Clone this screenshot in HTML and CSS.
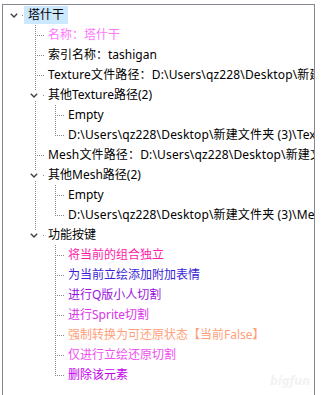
FILE: index.html
```html
<!DOCTYPE html>
<html lang="zh-CN">
<head>
    <meta charset="UTF-8">
    <meta name="viewport" content="width=device-width, initial-scale=1.0">
    <title>塔什干</title>
    <link rel="stylesheet" href="styles.css">
</head>
<body>
    <div class="tree">
        <div class="row">
            <span class="g expander"><svg width="8" height="5" viewBox="0 0 8 5"><path d="M0.8 0.8 L4 4 L7.2 0.8" fill="none" stroke="#404040" stroke-width="1.4"/></svg></span>
            <span class="label selected">塔什干</span>
        </div>
        <div class="row">
            <span class="g"></span><span class="g tee"></span>
            <span class="label violet">名称：塔什干</span>
        </div>
        <div class="row">
            <span class="g"></span><span class="g tee"></span>
            <span class="label">索引名称：tashigan</span>
        </div>
        <div class="row">
            <span class="g"></span><span class="g tee"></span>
            <span class="label path">Texture文件路径：D:\Users\qz228\Desktop\新建文件夹 (3)\Texture\tashigan.png</span>
        </div>
        <div class="row">
            <span class="g"></span>
            <span class="g line expander"><svg width="8" height="5" viewBox="0 0 8 5"><path d="M0.8 0.8 L4 4 L7.2 0.8" fill="none" stroke="#404040" stroke-width="1.4"/></svg></span>
            <span class="label">其他Texture路径(2)</span>
        </div>
        <div class="row">
            <span class="g"></span><span class="g line"></span><span class="g tee"></span>
            <span class="label">Empty</span>
        </div>
        <div class="row">
            <span class="g"></span><span class="g line"></span><span class="g end"></span>
            <span class="label path">D:\Users\qz228\Desktop\新建文件夹 (3)\Texture\tashigan_rw.png</span>
        </div>
        <div class="row">
            <span class="g"></span><span class="g tee"></span>
            <span class="label path">Mesh文件路径：D:\Users\qz228\Desktop\新建文件夹 (3)\Mesh\tashigan.obj</span>
        </div>
        <div class="row">
            <span class="g"></span>
            <span class="g line expander"><svg width="8" height="5" viewBox="0 0 8 5"><path d="M0.8 0.8 L4 4 L7.2 0.8" fill="none" stroke="#404040" stroke-width="1.4"/></svg></span>
            <span class="label">其他Mesh路径(2)</span>
        </div>
        <div class="row">
            <span class="g"></span><span class="g line"></span><span class="g tee"></span>
            <span class="label">Empty</span>
        </div>
        <div class="row">
            <span class="g"></span><span class="g line"></span><span class="g end"></span>
            <span class="label path">D:\Users\qz228\Desktop\新建文件夹 (3)\Mesh\tashigan_rw.obj</span>
        </div>
        <div class="row">
            <span class="g"></span>
            <span class="g top expander"><svg width="8" height="5" viewBox="0 0 8 5"><path d="M0.8 0.8 L4 4 L7.2 0.8" fill="none" stroke="#404040" stroke-width="1.4"/></svg></span>
            <span class="label">功能按键</span>
        </div>
        <div class="row">
            <span class="g"></span><span class="g"></span><span class="g tee"></span>
            <span class="label c-pink">将当前的组合独立</span>
        </div>
        <div class="row">
            <span class="g"></span><span class="g"></span><span class="g tee"></span>
            <span class="label c-blue">为当前立绘添加附加表情</span>
        </div>
        <div class="row">
            <span class="g"></span><span class="g"></span><span class="g tee"></span>
            <span class="label c-purple">进行Q版小人切割</span>
        </div>
        <div class="row">
            <span class="g"></span><span class="g"></span><span class="g tee"></span>
            <span class="label c-orchid">进行Sprite切割</span>
        </div>
        <div class="row">
            <span class="g"></span><span class="g"></span><span class="g tee"></span>
            <span class="label c-salmon">强制转换为可还原状态【当前False】</span>
        </div>
        <div class="row">
            <span class="g"></span><span class="g"></span><span class="g tee"></span>
            <span class="label c-violet">仅进行立绘还原切割</span>
        </div>
        <div class="row">
            <span class="g"></span><span class="g"></span><span class="g end"></span>
            <span class="label c-magenta">删除该元素</span>
        </div>
        <div class="watermark">bigfun</div>
    </div>
</body>
</html>
```

FILE: styles.css
```css
body {
    margin: 0;
    background: #fff;
    overflow: hidden;
    font-family: "Noto Sans", "Noto Sans CJK SC", sans-serif;
    font-size: 12px;
    color: #000;
}
.tree {
    position: relative;
    margin: 4px 0 0 2px;
    width: 313px;
    height: 391px;
    border: 1px solid #828790;
    border-bottom: none;
    padding-left: 1px;
    box-sizing: border-box;
    overflow: hidden;
}
.row {
    display: flex;
    align-items: center;
    height: 20px;
    white-space: nowrap;
}
.g {
    flex: none;
    width: 20px;
    height: 20px;
    display: flex;
    align-items: center;
    justify-content: center;
}
/* dotted guides: vertical at 11px, horizontal from 13px at middle */
.g.line {
    background: repeating-linear-gradient(#8a8a8a 0 1px, transparent 1px 2px) 11px 0 / 1px 100% no-repeat;
}
.g.top {
    background: repeating-linear-gradient(#8a8a8a 0 1px, transparent 1px 2px) 11px 0 / 1px 5px no-repeat;
}
.g.tee {
    background:
        repeating-linear-gradient(#8a8a8a 0 1px, transparent 1px 2px) 11px 0 / 1px 100% no-repeat,
        repeating-linear-gradient(90deg, #8a8a8a 0 1px, transparent 1px 2px) 13px 10px / 8px 1px no-repeat;
}
.g.end {
    background:
        repeating-linear-gradient(#8a8a8a 0 1px, transparent 1px 2px) 11px 0 / 1px 11px no-repeat,
        repeating-linear-gradient(90deg, #8a8a8a 0 1px, transparent 1px 2px) 13px 10px / 8px 1px no-repeat;
}
.g.expander svg {
    margin-top: 1px;
    background: #fff;
    padding: 2px 1px;
}
.g.expander {
    background-image: linear-gradient(#8a8a8a, #8a8a8a);
    background-position: 18px 10px;
    background-size: 1px 1px;
    background-repeat: no-repeat;
}
.g.line.expander {
    background:
        repeating-linear-gradient(#8a8a8a 0 1px, transparent 1px 2px) 11px 0 / 1px 100% no-repeat,
        linear-gradient(#8a8a8a, #8a8a8a) 19px 10px / 1px 1px no-repeat;
}
.g.top.expander {
    background:
        repeating-linear-gradient(#8a8a8a 0 1px, transparent 1px 2px) 11px 0 / 1px 5px no-repeat,
        linear-gradient(#8a8a8a, #8a8a8a) 19px 10px / 1px 1px no-repeat;
}
.label {
    height: 18px;
    line-height: 18px;
    padding: 0 4px;
}
.label.path {
    letter-spacing: 0.15px;
}
.label.selected {
    background: #cce8ff;
}
.violet { color: #ff77ff; }
.c-pink { color: #ff1aa8; }
.c-blue { color: #3a1fd6; }
.c-purple { color: #9a12e0; }
.c-orchid { color: #dd33ee; }
.c-salmon { color: #ffa07a; }
.c-violet { color: #f050f0; }
.c-magenta { color: #c600ee; }
.watermark {
    position: absolute;
    right: 4px;
    top: 366px;
    font-size: 13px;
    font-style: italic;
    font-weight: bold;
    color: #f2f2f2;
}
```
